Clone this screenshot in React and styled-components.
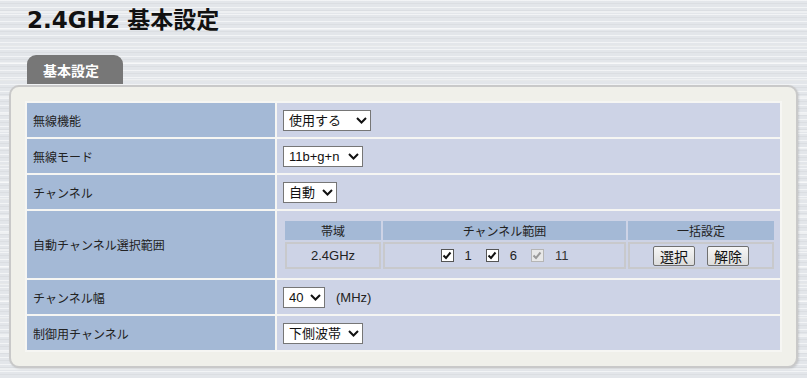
import React from "react";
import styled, { createGlobalStyle } from "styled-components";

const GlobalStyle = createGlobalStyle`
  body {
    margin: 0;
    font-family: "Liberation Sans", "Noto Sans CJK JP", sans-serif;
    color: #222;
    background-color: #e3e6ea;
    background-image:
      repeating-linear-gradient(180deg, rgba(255,255,255,0.55) 0 1px, transparent 1px 3px, rgba(0,0,0,0.035) 3px 4px, transparent 4px 7px),
      repeating-linear-gradient(180deg, transparent 0 11px, rgba(255,255,255,0.4) 11px 13px, transparent 13px 17px);
  }
`;

const Page = styled.div`
  width: 807px;
  height: 378px;
  box-sizing: border-box;
  padding: 4px 9px 0 9px;
  overflow: hidden;
`;

const Title = styled.h1`
  margin: 0 0 0 18px;
  font-family: "DejaVu Sans", "Noto Sans CJK JP", sans-serif;
  font-size: 23px;
  font-weight: bold;
  line-height: 32px;
  color: #111;
`;

const Tab = styled.div`
  margin: 19px 0 0 18px;
  width: 96px;
  height: 29px;
  box-sizing: border-box;
  padding-left: 16px;
  background: #777;
  border-radius: 9px 9px 0 0;
  color: #fff;
  font-family: "Noto Sans CJK JP", sans-serif;
  font-size: 14px;
  font-weight: bold;
  line-height: 30px;
`;

const Panel = styled.div`
  margin-top: 1px;
  border: 2px solid #c9c9c9;
  border-radius: 10px;
  background: #f0f0ea;
  padding: 14px 14px 14px 14px;
  box-shadow: 1px 1px 2px rgba(0, 0, 0, 0.12);
`;

const Table = styled.table`
  width: 100%;
  border-collapse: separate;
  border-spacing: 2px;
  background: #f6f6f3;
`;

const Label = styled.th`
  width: 236px;
  height: 34px;
  padding: 0 6px;
  background: #a4b9d6;
  text-align: left;
  font-family: "Noto Sans CJK JP", sans-serif;
  font-weight: normal;
  font-size: 12px;
  color: #222;
`;

const Value = styled.td`
  height: 34px;
  padding: ${(p) => (p.$nested ? "8px 4px 7px 6px" : "0 6px")};
  background: #cdd3e6;
  font-size: 13px;
`;

const SelectBox = styled.span`
  position: relative;
  display: inline-block;
  vertical-align: middle;
  width: ${(p) => p.$w}px;
  height: 21px;
`;

const NativeSelect = styled.select`
  appearance: none;
  width: 100%;
  height: 100%;
  margin: 0;
  box-sizing: border-box;
  padding: 0 0 0 5px;
  border: 1px solid #767676;
  border-radius: 0;
  background: #fff;
  color: #111;
  font-family: "Liberation Sans", "Noto Sans CJK JP", sans-serif;
  font-size: 13px;
  line-height: 19px;
  outline: none;
`;

const Chevron = styled.svg`
  position: absolute;
  right: 4px;
  top: 7px;
  pointer-events: none;
`;

const Unit = styled.span`
  margin-left: 11px;
  vertical-align: middle;
  font-size: 13px;
  color: #222;
`;

const Inner = styled.table`
  width: 100%;
  border-collapse: separate;
  border-spacing: 2px;
`;

const Head = styled.th`
  height: 19px;
  padding: 0;
  background: #a4b9d6;
  font-family: "Noto Sans CJK JP", sans-serif;
  font-weight: normal;
  font-size: 12px;
  color: #222;
  text-align: center;
  width: ${(p) => p.$w || "auto"};
`;

const Cell = styled.td`
  height: 23px;
  padding: 0;
  border: 2px solid #c8c9cc;
  background: #cdd3e6;
  text-align: center;
  font-size: 13px;
  color: #222;
`;

const Check = styled.label`
  display: inline-flex;
  align-items: center;
  margin: 0 7px;
  font-size: 13px;
  color: ${(p) => (p.$disabled ? "#333" : "#222")};
`;

const Box = styled.span`
  display: inline-flex;
  align-items: center;
  justify-content: center;
  width: 13px;
  height: 13px;
  box-sizing: border-box;
  margin-right: 11px;
  border: 1px solid ${(p) => (p.$disabled ? "#b5b5b5" : "#555")};
  background: ${(p) => (p.$disabled ? "#e8e8e8" : "#fff")};
`;

const Button = styled.button`
  width: 42px;
  height: 20px;
  margin: 0 6px;
  padding: 0;
  border: 1px solid #707070;
  border-radius: 2px;
  background: linear-gradient(#f6f6f6, #dcdcdc);
  font-family: "Noto Sans CJK JP", sans-serif;
  font-size: 14px;
  line-height: 18px;
  color: #111;
  vertical-align: middle;
`;

const Select = ({ w, value }) => (
  <SelectBox $w={w}>
    <NativeSelect defaultValue={value}>
      <option>{value}</option>
    </NativeSelect>
    <Chevron width="11" height="7" viewBox="0 0 11 7">
      <path d="M1 1 L5.5 5.5 L10 1" fill="none" stroke="#111" strokeWidth="2" />
    </Chevron>
  </SelectBox>
);

const Checkbox = ({ label, disabled }) => (
  <Check $disabled={disabled}>
    <Box $disabled={disabled}>
      <svg width="10" height="9" viewBox="0 0 10 9">
        <path
          d="M1.5 4.5 L4 7 L8.5 1.5"
          fill="none"
          stroke={disabled ? "#9a9a9a" : "#111"}
          strokeWidth="2"
        />
      </svg>
    </Box>
    {label}
  </Check>
);

const App = () => {
  return (
    <Page>
      <GlobalStyle />
      <Title>2.4GHz 基本設定</Title>
      <Tab>基本設定</Tab>
      <Panel>
        <Table>
          <tbody>
            <tr>
              <Label>無線機能</Label>
              <Value>
                <Select w={88} value="使用する" />
              </Value>
            </tr>
            <tr>
              <Label>無線モード</Label>
              <Value>
                <Select w={80} value="11b+g+n" />
              </Value>
            </tr>
            <tr>
              <Label>チャンネル</Label>
              <Value>
                <Select w={54} value="自動" />
              </Value>
            </tr>
            <tr>
              <Label>自動チャンネル選択範囲</Label>
              <Value $nested>
                <Inner>
                  <thead>
                    <tr>
                      <Head $w="96px">帯域</Head>
                      <Head>チャンネル範囲</Head>
                      <Head $w="146px">一括設定</Head>
                    </tr>
                  </thead>
                  <tbody>
                    <tr>
                      <Cell>2.4GHz</Cell>
                      <Cell>
                        <Checkbox label="1" />
                        <Checkbox label="6" />
                        <Checkbox label="11" disabled />
                      </Cell>
                      <Cell>
                        <Button>選択</Button>
                        <Button>解除</Button>
                      </Cell>
                    </tr>
                  </tbody>
                </Inner>
              </Value>
            </tr>
            <tr>
              <Label>チャンネル幅</Label>
              <Value>
                <Select w={42} value="40" />
                <Unit>(MHz)</Unit>
              </Value>
            </tr>
            <tr>
              <Label>制御用チャンネル</Label>
              <Value>
                <Select w={80} value="下側波帯" />
              </Value>
            </tr>
          </tbody>
        </Table>
      </Panel>
    </Page>
  );
};

export default App;
